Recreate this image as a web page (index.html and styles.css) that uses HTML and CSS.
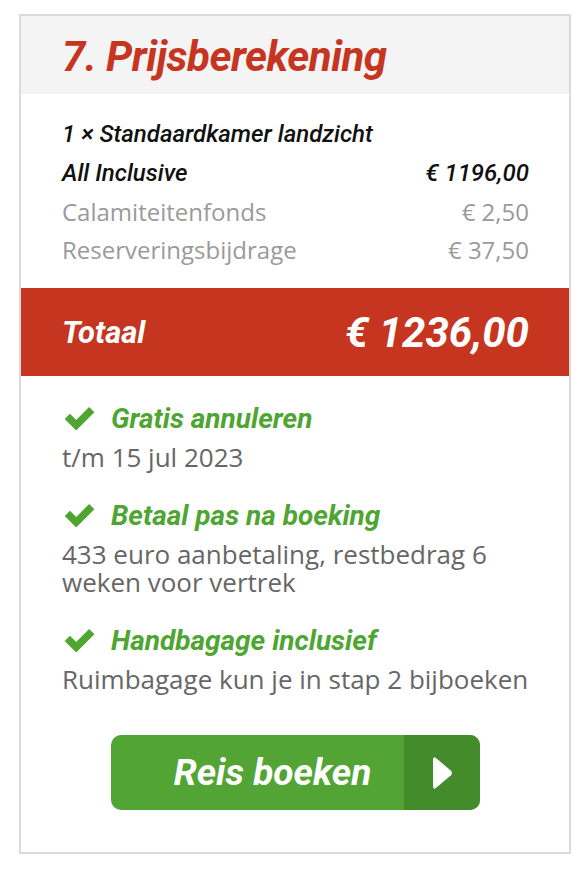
FILE: index.html
```html
<!DOCTYPE html>
<html lang="nl">
<head>
<meta charset="utf-8">
<title>Prijsberekening</title>
<link rel="stylesheet" href="styles.css">
</head>
<body>
<section class="card">
  <header class="card-head">
    <h2 class="title">7. Prijsberekening</h2>
  </header>
  <div class="lines">
    <div class="row strong"><span>1 × Standaardkamer landzicht</span></div>
    <div class="row strong"><span>All Inclusive</span><span>€ 1196,00</span></div>
    <div class="row muted"><span>Calamiteitenfonds</span><span>€ 2,50</span></div>
    <div class="row muted"><span>Reserveringsbijdrage</span><span>€ 37,50</span></div>
  </div>
  <div class="total">
    <span class="total-label">Totaal</span>
    <span class="total-amount">€ 1236,00</span>
  </div>
  <div class="features">
    <div class="feature">
      <div class="feature-head">
        <svg class="check" viewBox="0 0 34 24" aria-hidden="true"><path d="M0.5 12.5 L6 7 L12.5 13.5 L26 0 L31.5 5.5 L12.5 24.5 Z"/></svg>
        <span>Gratis annuleren</span>
      </div>
      <p class="feature-text">t/m 15 jul 2023</p>
    </div>
    <div class="feature">
      <div class="feature-head">
        <svg class="check" viewBox="0 0 34 24" aria-hidden="true"><path d="M0.5 12.5 L6 7 L12.5 13.5 L26 0 L31.5 5.5 L12.5 24.5 Z"/></svg>
        <span>Betaal pas na boeking</span>
      </div>
      <p class="feature-text">433 euro aanbetaling, restbedrag 6 weken voor vertrek</p>
    </div>
    <div class="feature">
      <div class="feature-head">
        <svg class="check" viewBox="0 0 34 24" aria-hidden="true"><path d="M0.5 12.5 L6 7 L12.5 13.5 L26 0 L31.5 5.5 L12.5 24.5 Z"/></svg>
        <span>Handbagage inclusief</span>
      </div>
      <p class="feature-text">Ruimbagage kun je in stap 2 bijboeken</p>
    </div>
    <a class="book-btn" href="#">
      <span class="book-label">Reis boeken</span>
      <span class="book-arrow">
        <svg viewBox="0 0 22 36" aria-hidden="true"><path d="M4 2 Q1 0 1 4 L1 32 Q1 36 4 34 L20 20.5 Q22 18 20 15.5 Z"/></svg>
      </span>
    </a>
  </div>
</section>
</body>
</html>
```
FILE: styles.css
```css
* { box-sizing: border-box; }
html, body { margin: 0; padding: 0; background: #fff; }
body { font-family: "Open Sans", "Liberation Sans", sans-serif; }

.card {
  width: 552px;
  margin: 14px 0 0 19px;
  border: 2px solid #dadada;
  background: #fff;
}

.card-head {
  background: #f4f4f4;
  height: 78px;
  display: flex;
  align-items: center;
  padding-left: 41px;
}
.title {
  margin: 0;
  font-family: Roboto, "Liberation Sans", sans-serif;
  font-style: italic;
  font-weight: 700;
  font-size: 42px;
  letter-spacing: -0.5px;
  color: #c5351f;
  line-height: 1;
  padding-top: 4px;
}

.lines {
  padding: 20px 40px 20px 41px;
}
.row {
  display: flex;
  justify-content: space-between;
  align-items: center;
  height: 39px;
}
.row.strong {
  font-family: Roboto, "Liberation Sans", sans-serif;
  font-style: italic;
  font-weight: 500;
  font-size: 24px;
  color: #111;
}
.row.muted {
  font-size: 24px;
  color: #9a9a9a;
  height: 38px;
}

.total {
  height: 88px;
  background: #c5351f;
  color: #fff;
  display: flex;
  justify-content: space-between;
  align-items: center;
  padding: 0 40px 0 41px;
  font-family: Roboto, "Liberation Sans", sans-serif;
  font-style: italic;
  font-weight: 700;
}
.total-label { font-size: 31px; }
.total-amount { font-size: 42px; }

.features {
  padding: 26px 36px 42px 41px;
}
.feature + .feature { margin-top: 28px; }
.feature-head {
  display: flex;
  align-items: center;
  gap: 14px;
  height: 32px;
  padding-left: 2px;
  color: #4ea531;
  font-family: Roboto, "Liberation Sans", sans-serif;
  font-style: italic;
  font-weight: 700;
  font-size: 28px;
}
.check {
  width: 33px;
  height: 23px;
  fill: #4ea531;
  flex: none;
}
.feature-text {
  margin: 9px 0 0;
  font-size: 26px;
  line-height: 28px;
  color: #666;
}

.book-btn {
  margin: 42px 0 0 49px;
  width: 369px;
  height: 75px;
  display: flex;
  border-radius: 10px;
  overflow: hidden;
  text-decoration: none;
  background: #52a535;
}
.book-label {
  flex: 1;
  display: flex;
  align-items: center;
  justify-content: center;
  padding-left: 30px;
  color: #fff;
  font-family: Roboto, "Liberation Sans", sans-serif;
  font-style: italic;
  font-weight: 700;
  font-size: 37px;
}
.book-arrow {
  width: 76px;
  background: #448b2b;
  display: flex;
  align-items: center;
  justify-content: center;
}
.book-arrow svg {
  width: 21px;
  height: 34px;
  fill: #fff;
}
```
